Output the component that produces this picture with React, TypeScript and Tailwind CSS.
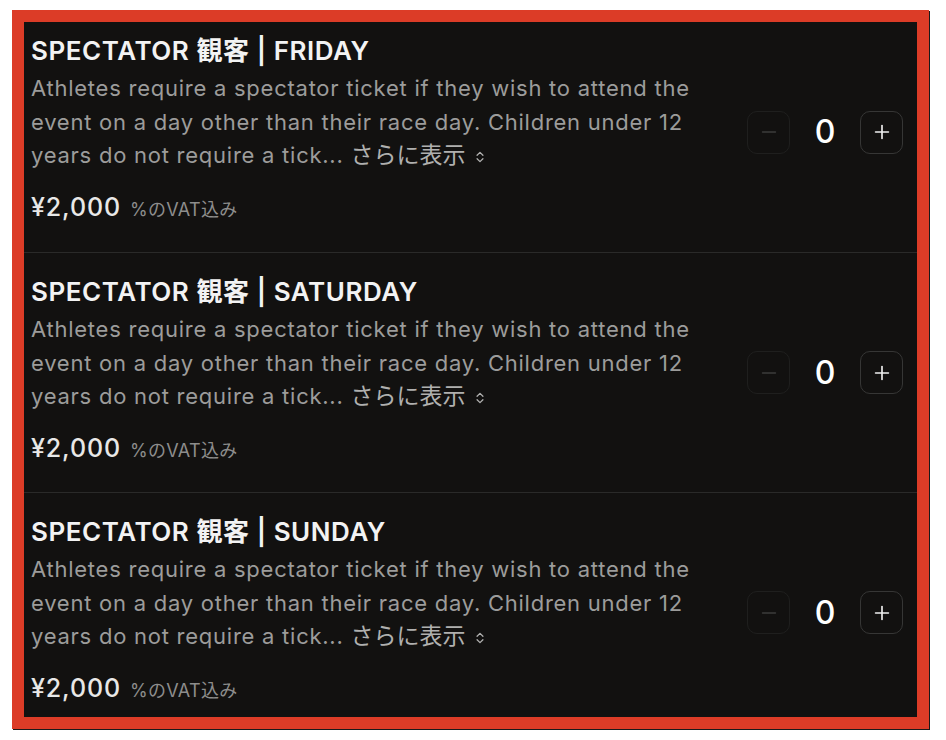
import React from 'react';
import { ChevronsUpDown, Minus, Plus } from 'lucide-react';

const tickets = [
  { day: 'FRIDAY', price: '¥2,000', first: true },
  { day: 'SATURDAY', price: '¥2,000', first: false },
  { day: 'SUNDAY', price: '¥2,000', first: false },
];

function TicketRow({ day, price, first }: { day: string; price: string; first: boolean }) {
  return (
    <div
      className={`flex items-center justify-between border-b border-[#2a2a29] pl-[7px] pr-[14px] shrink-0 ${
        first ? 'h-[231px]' : 'h-[240px]'
      }`}
    >
      <div className={`flex flex-col self-start ${first ? 'pt-[12px]' : 'pt-[22px]'}`}>
        <h3 className="text-[26px] leading-[34px] font-semibold text-[#f3f3f3] tracking-[0.55px]">
          SPECTATOR 観客 | {day}
        </h3>
        <p className="text-[22px] leading-[33.5px] text-[#9c9c9b] w-[690px] mt-[4px] tracking-[0.75px]">
          Athletes require a spectator ticket if they wish to attend the event on a day other than their race day. Children under 12 years do not require a tick...{' '}
          <span className="text-[23px] leading-[33.5px] tracking-normal text-[#b0b0af]">
            さらに表示
            <ChevronsUpDown size={14} strokeWidth={2.2} className="inline-block ml-[8px] align-[-1px]" />
          </span>
        </p>
        <div className="flex items-baseline gap-[9px] mt-[18px]">
          <span className="text-[25px] leading-[32px] font-medium text-[#e8e8e7] tracking-[0.9px]">{price}</span>
          <span className="text-[18px] text-[#8d8d8c] tracking-[0.3px]">%のVAT込み</span>
        </div>
      </div>
      <div className={`flex items-center ${first ? 'mt-[-10px]' : ''}`}>
        <button className="w-[43px] h-[43px] rounded-[10px] border border-[#1f1f1e] flex items-center justify-center text-[#3c3c3b]">
          <Minus size={22} strokeWidth={1.8} />
        </button>
        <span className="w-[70px] text-center text-[32px] font-medium text-white">0</span>
        <button className="w-[43px] h-[43px] rounded-[10px] border border-[#363635] flex items-center justify-center text-[#f0f0f0]">
          <Plus size={22} strokeWidth={1.8} />
        </button>
      </div>
    </div>
  );
}

export default function App() {
  return (
    <div className="min-h-[740px] bg-white pt-[10px] pl-[12px] font-['Inter','Noto_Sans_CJK_JP',sans-serif]">
      <div className="w-[917px] h-[719px] border-[12px] border-[#dc3c27] shadow-[1px_1px_0_#1a1a1a]">
        <div className="h-full bg-[#121110] overflow-hidden flex flex-col">
          {tickets.map((t) => (
            <TicketRow key={t.day} {...t} />
          ))}
        </div>
      </div>
    </div>
  );
}
